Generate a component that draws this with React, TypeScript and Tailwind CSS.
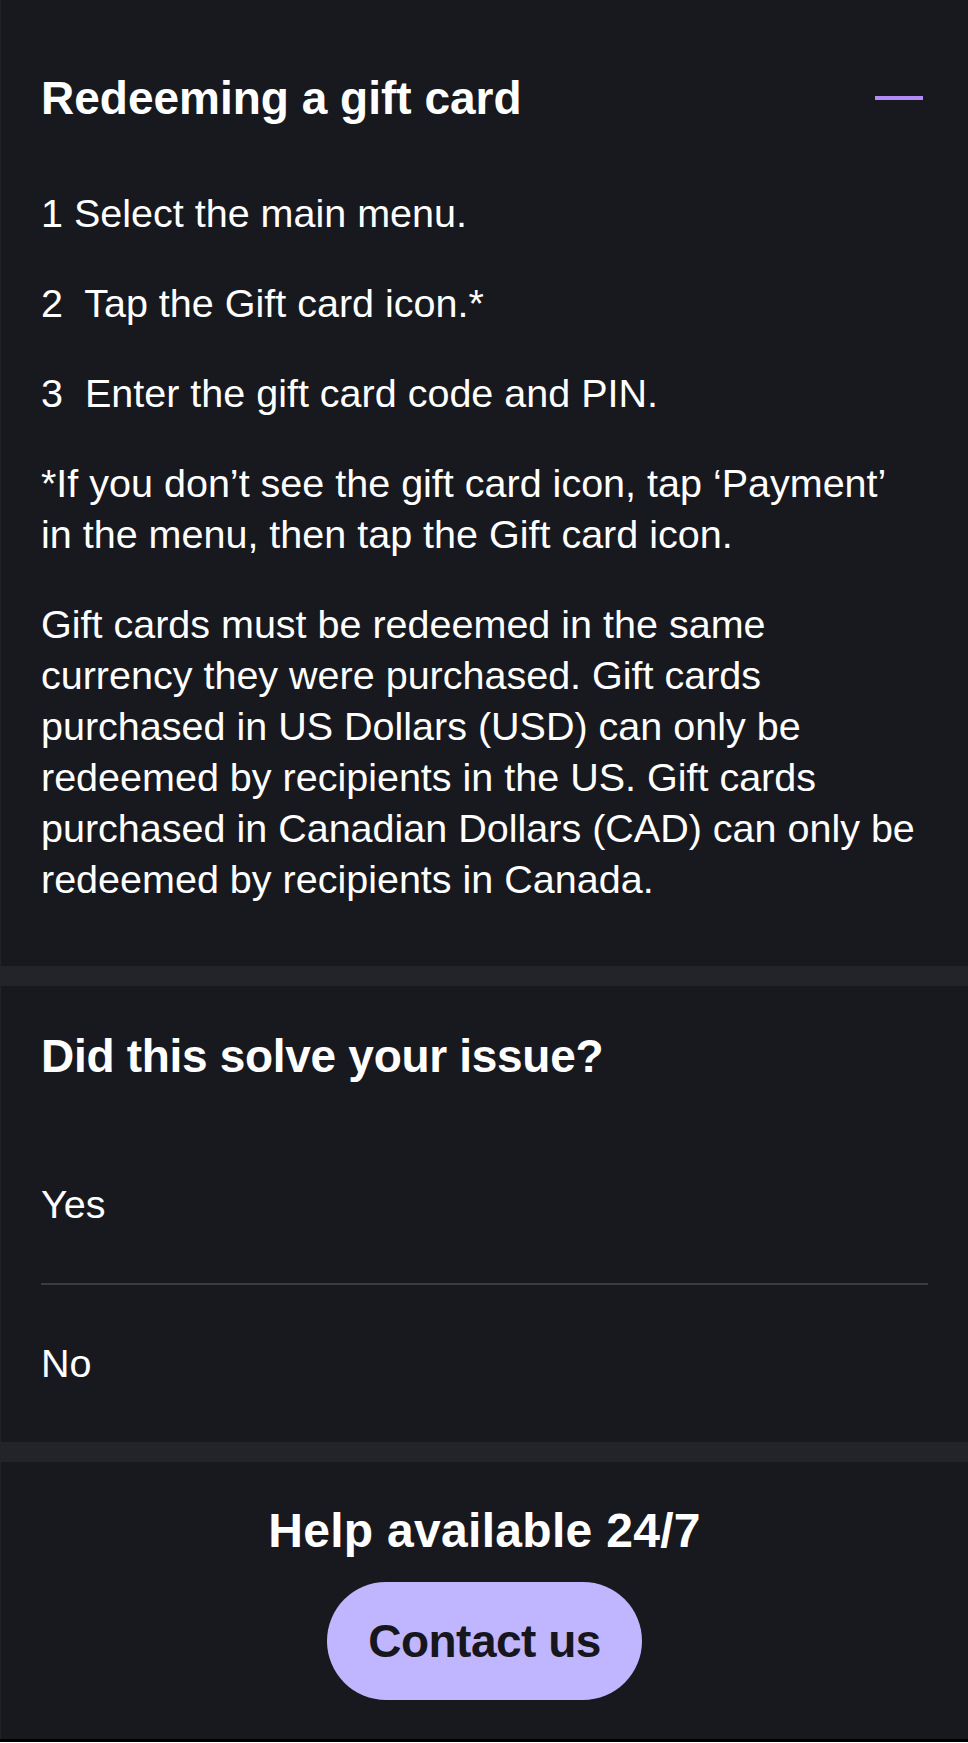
export default function App() {
  const font = { fontFamily: '"Liberation Sans", Arial, sans-serif' };
  return (
    <div className="w-[968px] bg-black" style={font}>
      <div className="bg-[#18191f] border-l border-[#222329]">
        {/* Section 1 */}
        <section className="pl-10 pr-10 pt-[70px] pb-[61px]">
          <div className="flex items-center justify-between h-[56px]">
            <h2 className="text-[46px] leading-[56px] font-bold text-white">Redeeming a gift card</h2>
            <span className="block w-[48px] h-[4px] bg-[#b38bf4] mr-[5px]" />
          </div>
          <div className="mt-[62px] flex flex-col gap-[39px] text-[39.5px] leading-[51px] text-white whitespace-nowrap">
            <p>1 Select the main menu.</p>
            <p>2&nbsp; Tap the Gift card icon.*</p>
            <p>3&nbsp; Enter the gift card code and PIN.</p>
            <p>
              *If you don’t see the gift card icon, tap ‘Payment’
              <br />
              in the menu, then tap the Gift card icon.
            </p>
            <p>
              Gift cards must be redeemed in the same
              <br />
              currency they were purchased. Gift cards
              <br />
              purchased in US Dollars (USD) can only be
              <br />
              redeemed by recipients in the US. Gift cards
              <br />
              purchased in Canadian Dollars (CAD) can only be
              <br />
              redeemed by recipients in Canada.
            </p>
          </div>
        </section>

        <div className="h-[20px] bg-[#232429]" />

        {/* Section 2 */}
        <section className="px-10 pt-[42px]">
          <h2 className="text-[46px] leading-[56px] font-bold text-white tracking-[-0.3px]">Did this solve your issue?</h2>
          <div className="mt-[42px] flex flex-col">
            <button className="text-left py-[53px] text-[39.5px] leading-[51px] text-white">Yes</button>
            <div className="h-[2px] bg-[#3a3b40]" />
            <button className="text-left py-[53px] text-[39.5px] leading-[51px] text-white">No</button>
          </div>
        </section>

        <div className="h-[20px] bg-[#232429]" />

        {/* Section 3 */}
        <section className="flex flex-col items-center pt-[41px] pb-[39px]">
          <h2 className="text-[48px] leading-[56px] font-bold text-white tracking-[0.3px]">Help available 24/7</h2>
          <button className="mt-[23px] w-[315px] h-[118px] rounded-full bg-[#c0b5ff] text-[#16161c] text-[46px] font-bold flex items-center justify-center tracking-[-0.5px]">
            Contact us
          </button>
        </section>
      </div>
      <div className="h-[3px] bg-black" />
    </div>
  );
}
